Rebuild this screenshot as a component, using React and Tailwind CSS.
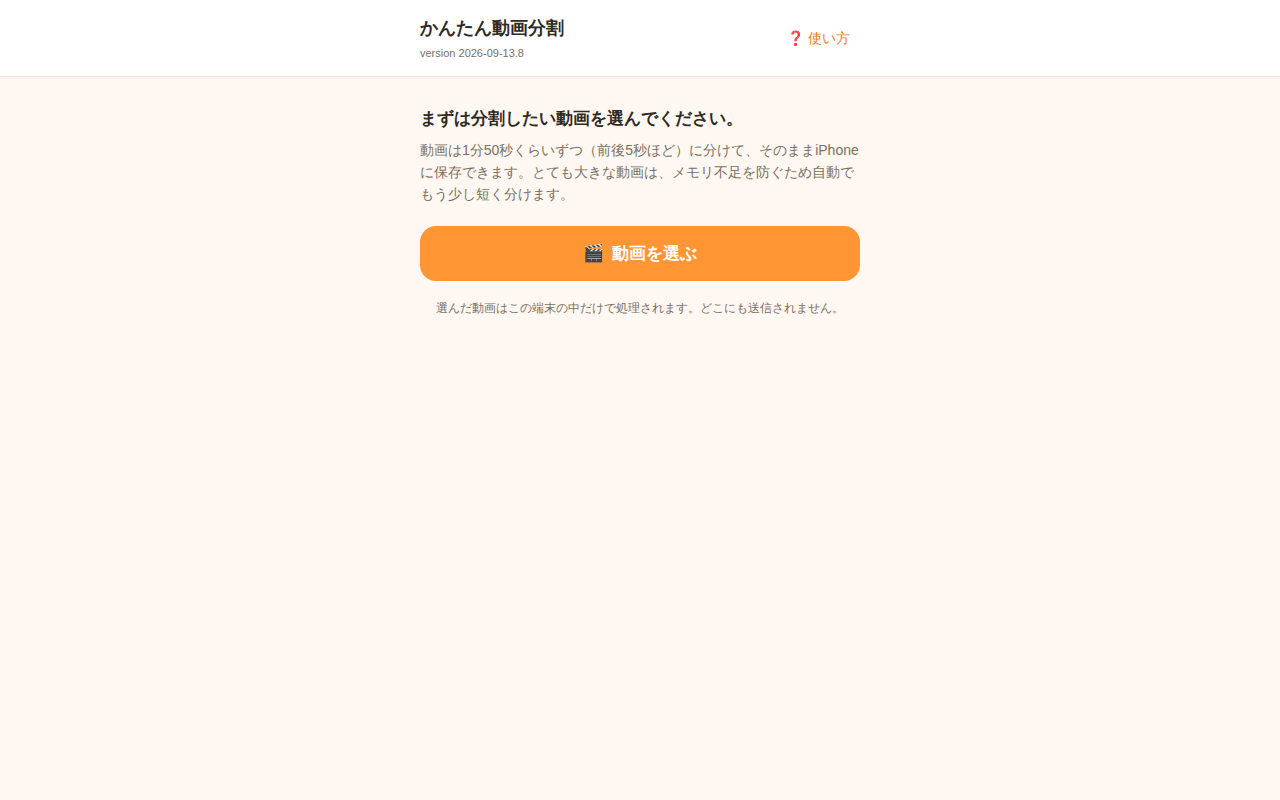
function Header() {
  return (
    <header className="border-b border-[#f0e0d8] bg-white">
      <div className="mx-auto flex h-[76px] w-[440px] items-center justify-between">
        <div>
          <h1 className="pt-px text-[18px] leading-[27px] font-bold">かんたん動画分割</h1>
          <p className="mt-[3px] text-[11px] leading-[17px] text-[#7a705f]">version 2026-09-13.8</p>
        </div>
        <button type="button" className="px-2.5 py-2 text-[14px] leading-[21px] text-[#e67e17]">
          ❓ 使い方
        </button>
      </div>
    </header>
  )
}

export default function App() {
  return (
    <div className="min-h-screen bg-[#fff7f1] font-['Liberation_Sans',sans-serif] text-[#2f2a22]" lang="ja">
      <Header />
      <main className="mx-auto w-[440px] pt-7">
        <h2 className="text-[17px] leading-[27px] font-bold">まずは分割したい動画を選んでください。</h2>
        <p className="mt-[7px] text-[14px] leading-[22px] text-[#7a705f]">
          動画は1分50秒くらいずつ（前後5秒ほど）に分けて、そのままiPhoneに保存できます。とても大きな動画は、メモリ不足を防ぐため自動でもう少し短く分けます。
        </p>
        <button
          type="button"
          className="mt-[21px] flex h-[55px] w-full items-center justify-center gap-2 rounded-2xl bg-[#ff9633] text-[17px] font-bold text-white"
        >
          <span>🎬</span>
          <span>動画を選ぶ</span>
        </button>
        <p className="mt-[18px] text-center text-[12px] leading-[19px] text-[#7a705f]">
          選んだ動画はこの端末の中だけで処理されます。どこにも送信されません。
        </p>
      </main>
    </div>
  )
}
